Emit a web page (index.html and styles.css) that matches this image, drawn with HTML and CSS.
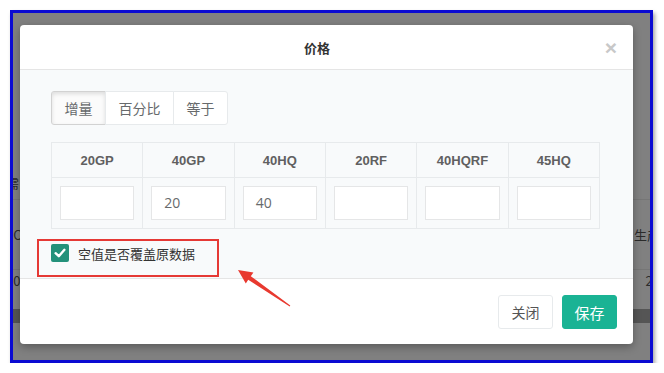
FILE: index.html
```html
<!DOCTYPE html>
<html>
<head>
<meta charset="utf-8">
<link rel="stylesheet" href="styles.css">
</head>
<body>
<div class="frame">
  <div class="page">
    <div class="bg-row r1"><span class="l">需</span><span class="r"></span></div>
    <div class="bg-row r2"><span class="l">0C</span><span class="r">生产</span></div>
    <div class="bg-row r3"><span class="l">20</span><span class="r">20</span></div>
    <div class="band"></div>
  </div>

  <div class="modal">
    <div class="m-header">
      <div class="m-title">价格</div>
      <span class="m-close">×</span>
    </div>
    <div class="m-body">
      <div class="btn-group">
        <button class="tab active">增量</button><button class="tab">百分比</button><button class="tab">等于</button>
      </div>
      <table class="grid">
        <thead>
          <tr><th>20GP</th><th>40GP</th><th>40HQ</th><th>20RF</th><th>40HQRF</th><th>45HQ</th></tr>
        </thead>
        <tbody>
          <tr>
            <td><div class="inp"></div></td>
            <td><div class="inp">20</div></td>
            <td><div class="inp">40</div></td>
            <td><div class="inp"></div></td>
            <td><div class="inp"></div></td>
            <td><div class="inp"></div></td>
          </tr>
        </tbody>
      </table>
      <div class="chk">
        <span class="box"><svg width="18" height="18" viewBox="0 0 18 18"><path d="M4.6 9.2 L7.8 12.2 L13.4 5.8" fill="none" stroke="#fff" stroke-width="2.4" stroke-linecap="round" stroke-linejoin="round"/></svg></span>
        <span class="chk-label">空值是否覆盖原数据</span>
      </div>
    </div>
    <div class="m-footer">
      <button class="btn btn-white">关闭</button>
      <button class="btn btn-save">保存</button>
    </div>
  </div>

  <div class="annot-box"></div>
  <svg class="arrow" width="80" height="55" viewBox="0 0 80 55">
    <polygon points="70.3,45.6 30.8,16.2 33.4,12.6 18,10 25.8,23.4 28.2,19.8 69.7,46.4" fill="#e8392f"/>
  </svg>
</div>
</body>
</html>
```

FILE: styles.css
```css
html, body {
  margin: 0;
  padding: 0;
  background: #ffffff;
}

body {
  font-family: "Open Sans", "Noto Sans CJK SC", sans-serif;
}

.frame {
  position: relative;
  margin: 10px 0 0 10px;
  width: 637px;
  height: 347px;
  border: 3px solid #0a0ad2;
  box-shadow: 2px 3px 4px rgba(0, 0, 0, 0.35);
  overflow: hidden;
  background: #808080;
}

/* background page under the overlay */
.page {
  display: flex;
  flex-direction: column;
  padding-top: 153px;
  font-family: "Noto Sans CJK SC", sans-serif;
  font-size: 13px;
  color: #2b2b2b;
}

.bg-row {
  display: flex;
  justify-content: space-between;
  align-items: center;
  border-bottom: 1px solid #767676;
}

.bg-row .l {
  margin-left: -7px;
}

.bg-row .r {
  margin-right: -10px;
}

.r1 { height: 33px; }
.r2 { height: 69px; }
.r3 { height: 21px; border-bottom: none; }

.band {
  margin-top: 18px;
  height: 14px;
  background: #555555;
}

/* modal */
.modal {
  position: absolute;
  left: 7px;
  top: 12px;
  width: 613px;
  height: 319px;
  background: #ffffff;
  border-radius: 4px;
  box-shadow: 0 3px 9px rgba(0, 0, 0, 0.3);
  display: flex;
  flex-direction: column;
  overflow: hidden;
}

.m-header {
  box-sizing: border-box;
  height: 45px;
  border-bottom: 1px solid #e5e5e5;
  display: flex;
  align-items: center;
  padding: 0 11px 0 14px;
}

.m-title {
  flex: 1;
  text-align: center;
  font-family: "Noto Sans CJK SC", sans-serif;
  font-weight: bold;
  font-size: 13px;
  color: #333333;
}

.m-close {
  width: 22px;
  text-align: center;
  font-family: "Liberation Sans", sans-serif;
  font-size: 21px;
  font-weight: bold;
  color: #c8c8c8;
  line-height: 1;
}

.m-body {
  box-sizing: border-box;
  height: 208px;
  background: #f8fafb;
  padding: 21px 30px 0 31px;
}

.btn-group {
  display: flex;
}

.tab {
  height: 34px;
  padding: 0 12.5px;
  margin: 0 0 0 -1px;
  border: 1px solid #e7eaec;
  background: #ffffff;
  color: #676a6c;
  font-family: "Noto Sans CJK SC", sans-serif;
  font-size: 14px;
}

.tab:first-child {
  margin-left: 0;
  border-radius: 3px 0 0 3px;
}

.tab:last-child {
  border-radius: 0 3px 3px 0;
}

.tab.active {
  border-color: #d2d2d2;
  background: #fbfbfb;
  box-shadow: inset 0 2px 4px rgba(0, 0, 0, 0.12);
}

.grid {
  margin-top: 17px;
  width: 549px;
  border-collapse: collapse;
  table-layout: fixed;
}

.grid th,
.grid td {
  border: 1px solid #e7eaec;
  text-align: center;
}

.grid th {
  height: 34px;
  padding: 0;
  font-family: "Liberation Sans", sans-serif;
  font-size: 13px;
  font-weight: bold;
  color: #606060;
}

.grid td {
  padding: 8px 8px;
}

.inp {
  box-sizing: border-box;
  height: 34px;
  background: #ffffff;
  border: 1px solid #e5e6e7;
  text-align: left;
  padding: 0 12px;
  line-height: 32px;
  font-size: 14px;
  color: #676a6c;
}

.chk {
  display: flex;
  align-items: center;
  margin-top: 15px;
  height: 18px;
}

.box {
  width: 18px;
  height: 18px;
  background: #23917a;
  border-radius: 2px;
  display: flex;
}

.chk-label {
  margin-left: 9px;
  font-family: "Noto Sans CJK SC", sans-serif;
  font-size: 13px;
  color: #333333;
}

.m-footer {
  flex: 1;
  border-top: 1px solid #e5e5e5;
  display: flex;
  justify-content: flex-end;
  align-items: flex-start;
  gap: 9px;
  padding: 16px 16px 0 0;
}

.btn {
  box-sizing: border-box;
  width: 55px;
  height: 34px;
  border-radius: 3px;
  font-family: "Noto Sans CJK SC", sans-serif;
  font-size: 14px;
  padding: 0;
}

.btn-white {
  background: #ffffff;
  border: 1px solid #e7eaec;
  color: #555555;
}

.btn-save {
  background: #1ab394;
  border: 1px solid #1ab394;
  color: #ffffff;
  font-size: 15px;
}

/* annotation overlay */
.annot-box {
  position: absolute;
  left: 24px;
  top: 226px;
  width: 182px;
  height: 38px;
  box-sizing: border-box;
  border: 2px solid #e53935;
}

.arrow {
  position: absolute;
  left: 207px;
  top: 247px;
}
```
